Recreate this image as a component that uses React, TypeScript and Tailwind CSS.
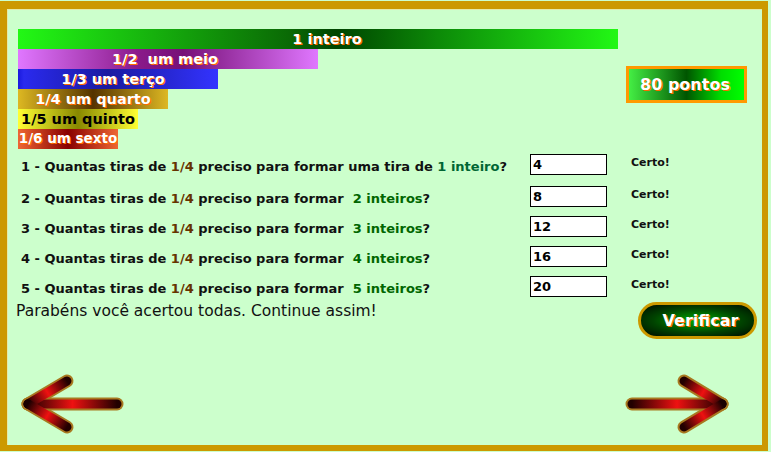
import React from "react";

const font = { fontFamily: '"DejaVu Sans", Verdana, sans-serif' };

function Bar({ w, bg, text, dark, size, pad }: { w: string; bg: string; text: string; dark?: boolean; size?: string; pad?: string }) {
  return (
    <div
      className={`${w} ${bg} ${size ?? "text-[14.5px]"} ${pad ?? ""} h-[20px] flex items-center justify-center whitespace-pre font-bold leading-none ${
        dark ? "text-black" : "text-white [text-shadow:1px_1px_0_#ff6a00]"
      }`}
    >
      {text}
    </div>
  );
}

function Question({ n, target, answer, mt }: { n: number; target: React.ReactNode; answer: string; mt: string }) {
  return (
    <div className={`flex items-start ${mt}`}>
      <div className="w-[514px] h-[21px] pl-[5px] text-[13px] leading-[25px] font-bold text-[#111] whitespace-pre">
        <span>{n} - Quantas tiras de </span>
        <span className="text-[#663300]">1/4</span>
        <span> preciso para formar </span>
        {target}
        <span>?</span>
      </div>
      <input
        readOnly
        defaultValue={answer}
        className="w-[77px] h-[21px] border border-black bg-white px-[2px] text-[13px] font-bold text-black outline-none"
      />
      <div className="ml-[24px] mt-[2px] text-[11px] leading-[13px] font-bold text-[#111]">Certo!</div>
    </div>
  );
}

function Stops() {
  return (
    <>
      <stop offset="0" stopColor="#1a0000" />
      <stop offset="0.5" stopColor="#ee1111" />
      <stop offset="1" stopColor="#220000" />
    </>
  );
}

function LeftArrow() {
  return (
    <svg width="112" height="66" viewBox="16 370 112 66">
      <defs>
        <linearGradient id="la1" gradientUnits="userSpaceOnUse" x1="28" y1="404" x2="117" y2="404">
          <Stops />
        </linearGradient>
        <linearGradient id="la2" gradientUnits="userSpaceOnUse" x1="28" y1="404" x2="67" y2="381">
          <Stops />
        </linearGradient>
        <linearGradient id="la3" gradientUnits="userSpaceOnUse" x1="28" y1="404" x2="67" y2="427">
          <Stops />
        </linearGradient>
      </defs>
      <g stroke="#a87820" strokeWidth="13" strokeLinecap="round" fill="none">
        <line x1="28" y1="404" x2="117" y2="404" />
        <line x1="28" y1="404" x2="67" y2="381" />
        <line x1="28" y1="404" x2="67" y2="427" />
      </g>
      <g strokeWidth="9" strokeLinecap="round" fill="none">
        <line x1="28" y1="404" x2="117" y2="404" stroke="url(#la1)" />
        <line x1="28" y1="404" x2="67" y2="381" stroke="url(#la2)" />
        <line x1="28" y1="404" x2="67" y2="427" stroke="url(#la3)" />
      </g>
    </svg>
  );
}

function RightArrow() {
  return (
    <svg width="116" height="66" viewBox="620 370 116 66">
      <defs>
        <linearGradient id="ra1" gradientUnits="userSpaceOnUse" x1="722" y1="404" x2="632" y2="404">
          <Stops />
        </linearGradient>
        <linearGradient id="ra2" gradientUnits="userSpaceOnUse" x1="722" y1="404" x2="684" y2="381">
          <Stops />
        </linearGradient>
        <linearGradient id="ra3" gradientUnits="userSpaceOnUse" x1="722" y1="404" x2="684" y2="427">
          <Stops />
        </linearGradient>
      </defs>
      <g stroke="#a87820" strokeWidth="13" strokeLinecap="round" fill="none">
        <line x1="632" y1="404" x2="722" y2="404" />
        <line x1="722" y1="404" x2="684" y2="381" />
        <line x1="722" y1="404" x2="684" y2="427" />
      </g>
      <g strokeWidth="9" strokeLinecap="round" fill="none">
        <line x1="632" y1="404" x2="722" y2="404" stroke="url(#ra1)" />
        <line x1="722" y1="404" x2="684" y2="381" stroke="url(#ra2)" />
        <line x1="722" y1="404" x2="684" y2="427" stroke="url(#ra3)" />
      </g>
    </svg>
  );
}

export default function App() {
  return (
    <div className="w-[771px] h-[452px] bg-[#ccffcc] pt-px" style={font}>
      <div className="w-[768px] h-[450px] bg-[#ccffcc] border-[#cc9900] border-l-[7px] border-t-[8px] border-r-[6px] border-b-[6px] shadow-[inset_1px_1px_0_#e4eaa8] pl-[9px] pt-[20px] flex flex-col">
        <div className="flex items-start">
          <div className="ml-[2px] w-[600px] flex flex-col">
            <Bar w="w-[600px]" pad="pl-[18px]" bg="bg-[linear-gradient(to_right,#22f815,#0a6a05_45%,#004400_53%,#0c8a08_70%,#22f815)]" text="1 inteiro" />
            <Bar w="w-[300px]" pad="pr-[6px]" bg="bg-[linear-gradient(to_right,#e077ff,#8a1a8a_40%,#771077_55%,#e077ff)]" text="1/2  um meio" />
            <Bar w="w-[200px]" pad="pr-[10px]" bg="bg-[linear-gradient(to_right,#1a1add,#2a2aee_3%,#1a1aa0_45%,#3333ff)]" text="1/3 um terço" />
            <Bar w="w-[150px]" bg="bg-[linear-gradient(to_right,#ddb822,#553300_50%,#ddb822)]" text="1/4 um quarto" />
            <Bar w="w-[120px]" bg="bg-[linear-gradient(to_right,#ffff33,#888800_50%,#ffff33)]" text="1/5 um quinto" dark />
            <Bar w="w-[100px]" bg="bg-[linear-gradient(to_right,#ee6633,#880000_50%,#ee6633)]" text="1/6 um sexto" size="text-[13.5px]" />
          </div>
          <div className="ml-[8px] mt-[37px] w-[121px] h-[37px] border-[3px] border-[#ff9900] bg-[linear-gradient(to_right,#44ee44,#005500_50%,#00dd00_80%,#00ff00)] flex items-center justify-center pr-[3px] text-white font-bold text-[16px] leading-none [text-shadow:1px_1px_0_#ff6a00]">
            80 pontos
          </div>
        </div>

        <div className="flex flex-col">
          <Question
            n={1}
            mt="mt-[5px]"
            answer="4"
            target={
              <>
                <span>uma tira de </span>
                <span className="text-[#006633]">1 inteiro</span>
              </>
            }
          />
          <Question n={2} mt="mt-[11px]" answer="8" target={<span className="text-[#006600]">{"\u00a0"}2 inteiros</span>} />
          <Question n={3} mt="mt-[9px]" answer="12" target={<span className="text-[#006600]">{"\u00a0"}3 inteiros</span>} />
          <Question n={4} mt="mt-[9px]" answer="16" target={<span className="text-[#006600]">{"\u00a0"}4 inteiros</span>} />
          <Question n={5} mt="mt-[9px]" answer="20" target={<span className="text-[#006600]">{"\u00a0"}5 inteiros</span>} />
        </div>

        <div className="flex items-start mt-[5px]">
          <div className="text-[15.5px] leading-[18px] text-[#111]">Parabéns você acertou todas. Continue assim!</div>
          <button className="ml-auto mr-[5px] w-[119px] h-[37px] rounded-full border-[3px] border-[#cc9900] bg-[radial-gradient(ellipse_at_center,#00aa00,#004400_55%,#000800)] text-white font-bold text-[16px] leading-none [text-shadow:1px_1px_0_#ff6a00] flex items-center justify-center pl-[6px]">
            Verificar
          </button>
        </div>

        <div className="flex items-start justify-between mt-[31px]">
          <LeftArrow />
          <div className="mr-[26px]">
            <RightArrow />
          </div>
        </div>
      </div>
    </div>
  );
}
